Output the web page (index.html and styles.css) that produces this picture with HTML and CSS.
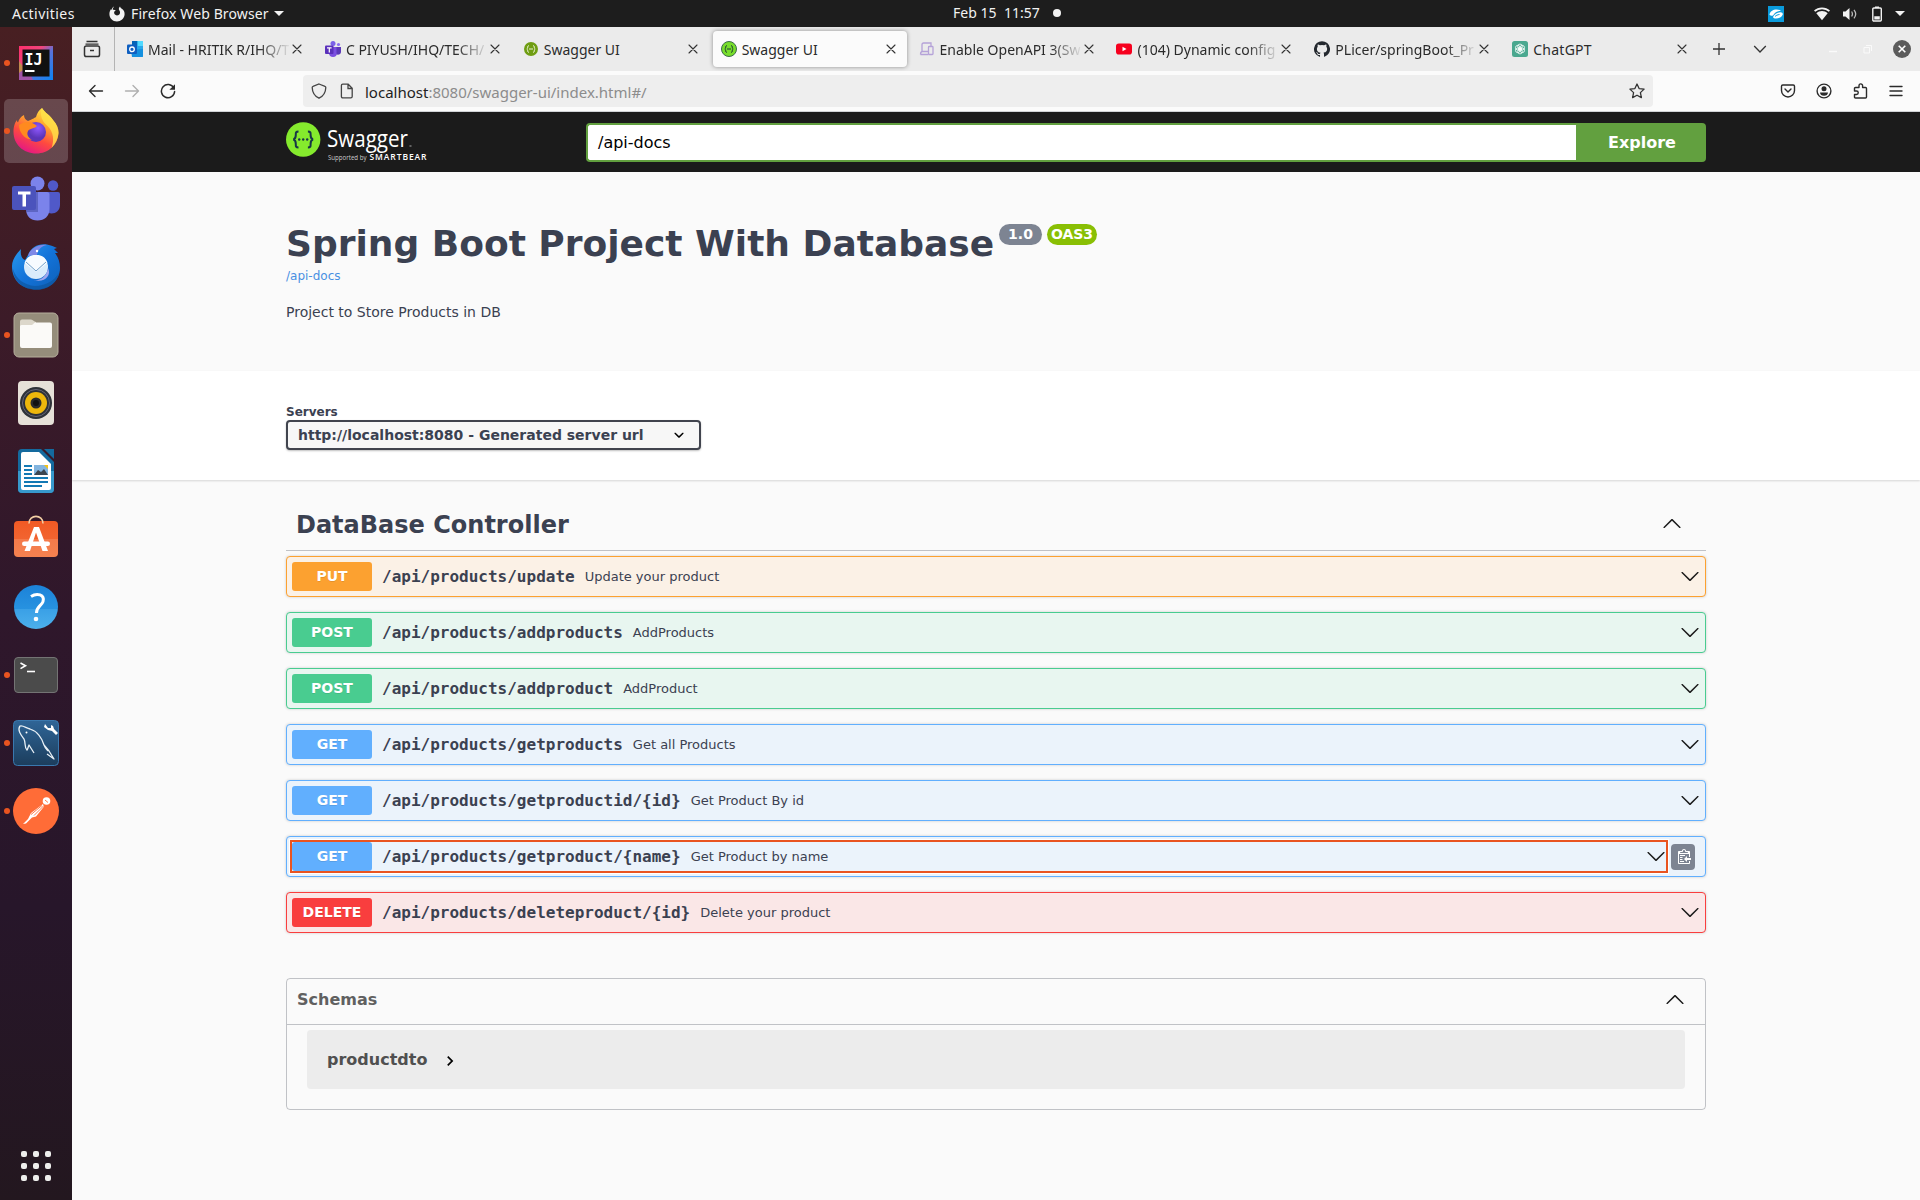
FILE: index.html
```html
<!DOCTYPE html>
<html lang="en">
<head>
<meta charset="utf-8">
<title>Swagger UI</title>
<link rel="stylesheet" href="styles.css">
</head>
<body>
<svg class="defs" width="0" height="0" aria-hidden="true">
  <defs>
    <linearGradient id="gIj" x1="0" y1="0" x2="1" y2="1"><stop offset="0" stop-color="#fe2f6c"/><stop offset=".35" stop-color="#f0457b"/><stop offset=".55" stop-color="#5a72d8"/><stop offset="1" stop-color="#0a85f5"/></linearGradient>
    <linearGradient id="gFox" x1=".8" y1="0" x2=".3" y2="1"><stop offset="0" stop-color="#fff44f"/><stop offset=".35" stop-color="#ffa52e"/><stop offset=".65" stop-color="#ff4b3e"/><stop offset="1" stop-color="#e31587"/></linearGradient>
    <radialGradient id="gGlobe" cx=".6" cy=".3"><stop offset="0" stop-color="#9059ff"/><stop offset="1" stop-color="#5b35b8"/></radialGradient>
    <linearGradient id="gBird" x1="0" y1="0" x2="1" y2="1"><stop offset="0" stop-color="#2a9cf0"/><stop offset=".5" stop-color="#1373d9"/><stop offset="1" stop-color="#0e5fb8"/></linearGradient>
    <linearGradient id="gBlue" x1="0" y1="0" x2="0" y2="1"><stop offset="0" stop-color="#1c82d8"/><stop offset=".54" stop-color="#2792e0"/><stop offset=".55" stop-color="#3aa0e6"/><stop offset="1" stop-color="#4cb0ec"/></linearGradient>
    <linearGradient id="gOrange" x1="0" y1="0" x2="0" y2="1"><stop offset="0" stop-color="#f15a24"/><stop offset=".5" stop-color="#f26430"/><stop offset=".51" stop-color="#f47a4a"/><stop offset="1" stop-color="#f58250"/></linearGradient>
    <linearGradient id="gSql" x1="0" y1="0" x2="0" y2="1"><stop offset="0" stop-color="#2f6597"/><stop offset="1" stop-color="#1c3d5c"/></linearGradient>
    <symbol id="down" viewBox="0 0 20 20"><path d="M17.418 6.109c.272-.268.709-.268.979 0s.271.701 0 .969l-7.908 7.83c-.27.268-.707.268-.979 0l-7.908-7.83c-.27-.268-.27-.701 0-.969.271-.268.709-.268.979 0L10 13.25l7.418-7.141z"/></symbol>
    <symbol id="up" viewBox="0 0 20 20"><path d="M17.418 14.908c.272.268.709.268.979 0s.271-.701 0-.969l-7.908-7.83c-.27-.268-.707-.268-.979 0l-7.908 7.83c-.27.268-.27.701 0 .969.271.268.709.268.979 0L10 7.767l7.418 7.141z"/></symbol>
    <symbol id="close" viewBox="0 0 16 16"><path d="M4 4l8 8M12 4l-8 8" fill="none" stroke="#333" stroke-width="1.1" stroke-linecap="round"/></symbol>
  </defs>
</svg>

<header class="panel">
  <div class="panel-left">
    <span class="t-activities">Activities</span>
    <span class="app-menu">
      <svg width="16" height="16" viewBox="0 0 16 16"><path d="M5.2.6C4 2 3.700 3 3.900 3.900 5 3.700 6 3.900 6.900 4.500 5.200 5 4.900 6.200 5.200 7.300c.5 1.700 2.300 2.500 3.900 2C11.200 8.600 11.600 6.200 10.400 4.600 9.500 3.500 9.700 1.700 11 .6c.3 1.100 1.200 1.800 2.200 2.500 1.600 1.200 2.600 3.200 2.400 5.400-.4 4-3.700 7-7.700 7C3.700 15.500.4 12.100.4 8 .4 6 1.100 4.300 2.100 3 2.200 3.600 2.300 3.800 2.600 4 2.900 2.500 3.900 1.200 5.200.6z" fill="#f2f2f2"/></svg>
      <span class="t-firefox">Firefox Web Browser</span>
      <i class="tri"></i>
    </span>
  </div>
  <div class="clock"><span class="t-date">Feb 15</span><span class="t-time">11:57</span><i class="notif"></i></div>
  <div class="status">
    <svg class="zs" width="16" height="16" viewBox="0 0 16 16"><rect width="16" height="16" fill="#0a9bdc"/><path d="M1.500 8.500C2 5.500 5 3.500 8.500 3.500c2 0 3.500.5 4.500 1.500-2.500-.3-5 .7-6.500 2.500l-1.500 2c-2 .5-3.500 0-3.500-1z" fill="#fff"/><path d="M5 11c1-2.500 4-4.500 7-4.800 2-.2 3 .8 2.700 2.300C14 11 11 12.500 8 12.500c-1.500 0-2.700-.5-3-1.500z" fill="#fff"/><path d="M7 10.500c1-1 2.500-1.800 4.500-2" stroke="#0a9bdc" fill="none"/></svg>
    <svg class="wifi" width="16" height="16" viewBox="0 0 16 16"><path d="M.6 5.200C4.600 1.400 11.400 1.400 15.400 5.200" fill="none" stroke="#f2f2f2" stroke-width="1.700"/><path d="M2.300 7.200C5.600 4.400 10.400 4.400 13.700 7.200L8 14.200z" fill="#f2f2f2"/></svg>
    <svg class="vol" width="16" height="16" viewBox="0 0 16 16"><path d="M1 5.500h2.500L7.500 2v12L3.500 10.500H1z" fill="#f2f2f2"/><path d="M9.600 5.500c1 1.500 1 3.500 0 5M12 3.800c2 2.500 2 6 0 8.500" fill="none" stroke="#bbb" stroke-width="1.300"/></svg>
    <svg class="bat" width="12" height="16" viewBox="0 0 12 16"><rect x="1.800" y="2" width="8.500" height="13" rx="1" fill="none" stroke="#f2f2f2" stroke-width="1.400"/><path d="M4 .6h4v1.500H4zM3.300 10.200h5.500v3.300H3.300z" fill="#f2f2f2"/></svg>
    <i class="tri"></i>
  </div>
</header>

<div class="desktop">
<nav class="dock">
  <div class="dock-item running">
    <svg width="48" height="48" viewBox="0 0 48 48"><rect x="7" y="7" width="34" height="34" fill="url(#gIj)"/><path d="M7 22l5 7-1 12H7z" fill="#c08a4e"/><path d="M7 34l8-6 6 13H7z" fill="#a155a8"/><rect x="10.500" y="10.500" width="27" height="27" fill="#111"/><text class="ij" x="12.500" y="25.500">IJ</text><rect x="13" y="31" width="9.500" height="2" fill="#fff"/></svg>
  </div>
  <div class="dock-item running active">
    <svg width="48" height="48" viewBox="0 0 48 48"><path d="M30 1c3 5 8 7 11 12 4 4 5.500 9 5.500 13C46 38 36 46.500 24.500 46.500 11 46.500 1.500 37 1.500 25c0-6 1.500-9.500 3.500-12 0 1.500.5 2 1 2.500C7 12 9 9.500 12 8c0 3 1.500 5 4 6 5-2 6-3 8-4 1-4 3-7 6-9z" fill="url(#gFox)"/><path d="M30 1c3 5 8 7 11 12 4 4 5.500 9 5.500 13-.5 6-3 11-7 15 3-8 2-16-4-22-6-5-8-12-5.500-18z" fill="#ffe14a" opacity=".8"/><circle cx="24" cy="25" r="10" fill="url(#gGlobe)"/><path d="M7 18c6-4 12-4 18 1-3 3-7 2-9 5-2 4 1 7 4 9-8-1-13-8-13-15z" fill="#ff8a1f"/></svg>
  </div>
  <div class="dock-item">
    <svg width="48" height="48" viewBox="0 0 48 48"><circle cx="25.500" cy="8.500" r="7" fill="#7b83eb"/><circle cx="41" cy="10.500" r="5.200" fill="#5059c9"/><path d="M34 17h12a2 2 0 0 1 2 2v11c0 5-4 8.500-8.500 8.500S32 35 32 30z" fill="#5059c9"/><path d="M14 17h21a2.500 2.500 0 0 1 2.500 2.500V34c0 7-5 11.500-12 11.500S14 41 14 34z" fill="#7b83eb"/><path d="M14 17h12v20H14z" fill="#4a52a8" opacity=".6"/><rect x="0" y="11" width="24" height="24" rx="2" fill="#4b53bc"/><path d="M6 16.500h12.500v3h-4.500v12h-3.500v-12H6z" fill="#fff"/></svg>
  </div>
  <div class="dock-item">
    <svg width="48" height="48" viewBox="0 0 48 48"><path d="M16 12C19 4 27 0 35 1.500c4 .8 7 2 10 3.500l-3 1 4 4-3 0c3 4 5 9 5 15 0 12-10 21.500-23 21.500C10 46.500 0 38 0 23c0-6 4-12 9-17-1 6 1 10 4 11z" fill="url(#gBird)"/><path d="M1 26c3 10 11 16 22 17 10 0 19-5 24-13-2 10-11 17-23 17S1 38 1 26z" fill="#0d5298" opacity=".6"/><path d="M16 13C18 5 27 1 35 2c-6 1-9 5-10 10z" fill="#a78bea" opacity=".7"/><circle cx="24" cy="24" r="12" fill="#d9ecfb"/><path d="M12.500 20l11.500 9 11.500-9C33 14 30 12 24 12s-9 2-11.500 8z" fill="#f6fbff"/><path d="M14 19l10 9 10-9" fill="none" stroke="#6f9fc9" stroke-width="1"/><path d="M22 37c7 1 13-4 14-12 4 8-4 15-14 12z" fill="#9fa6ee"/><circle cx="25" cy="8" r="1.200" fill="#fff"/></svg>
  </div>
  <div class="dock-item running">
    <svg width="48" height="48" viewBox="0 0 48 48"><rect x="2" y="2" width="44" height="44" rx="5" fill="#958d7b" stroke="#b5ae9c"/><path d="M8 10.500a2 2 0 0 1 2-2h9c2 0 3 2.500 5 2.500v7H8z" fill="#dcd7cb"/><path d="M8 15.500c0-1.500 1-1.500 3-1.500h8c3 0 2-2.500 5-2.500h14a2 2 0 0 1 2 2V35a2 2 0 0 1-2 2H10a2 2 0 0 1-2-2z" fill="#fbfaf8"/></svg>
  </div>
  <div class="dock-item">
    <svg width="48" height="48" viewBox="0 0 48 48"><rect x="6" y="2" width="36" height="44" rx="4" fill="#e6e1d8"/><circle cx="24" cy="24" r="16" fill="#2e3238"/><circle cx="24" cy="24" r="13.500" fill="none" stroke="#667" stroke-width="1"/><circle cx="24" cy="24" r="11" fill="#edb70c"/><circle cx="24" cy="24" r="5.500" fill="#2a2a2a"/><circle cx="24" cy="24" r="3" fill="#111"/></svg>
  </div>
  <div class="dock-item">
    <svg width="48" height="48" viewBox="0 0 48 48"><path d="M10 2h19l13 13v27a4 4 0 0 1-4 4H10a4 4 0 0 1-4-4V6a4 4 0 0 1 4-4z" fill="#146a9e"/><path d="M6 24h36v18a4 4 0 0 1-4 4H10a4 4 0 0 1-4-4z" fill="#3799cc"/><path d="M11 5h16l12 12v24a2 2 0 0 1-2 2H11a2 2 0 0 1-2-2V7a2 2 0 0 1 2-2z" fill="#fff"/><path d="M32 2h10v10z" fill="#146a9e"/><path d="M12 18h8v2h-8zM12 22h8v2h-8zM12 26h8v2h-8zM12 30h24v2H12zM12 34h24v2H12zM12 38h18v2H12z" fill="#1379b4"/><rect x="22" y="18" width="14" height="10" fill="#83b5df"/><path d="M22 28l4-5 3 2 3-3 4 6z" fill="#3c4650"/><path d="M32 18h4v4z" fill="#f5c211"/></svg>
  </div>
  <div class="dock-item">
    <svg width="48" height="48" viewBox="0 0 48 48"><rect x="2" y="6" width="44" height="36" rx="4" fill="url(#gOrange)"/><path d="M17 8.500c0-9.500 14-9.500 14 0" fill="none" stroke="#f2cfa4" stroke-width="1.600"/><path d="M22 12h5l9 24h-5.500L24 17.500 18 36h-5.500z" fill="#fff"/><rect x="10" y="26.500" width="28" height="4.500" rx="2.200" fill="#fff"/></svg>
  </div>
  <div class="dock-item">
    <svg width="48" height="48" viewBox="0 0 48 48"><circle cx="24" cy="24" r="22" fill="url(#gBlue)"/><path d="M19 13.500c6-4 14-2 12 5-1.500 4.500-6.500 5-6.500 11.500" fill="none" stroke="#fff" stroke-width="3"/><circle cx="24" cy="36" r="2.300" fill="#fff"/></svg>
  </div>
  <div class="dock-item running">
    <svg width="48" height="48" viewBox="0 0 48 48"><rect x="2.500" y="6.500" width="43" height="35" rx="3.500" fill="#4b4b4b" stroke="#747474"/><path d="M8.500 12l5 2.800-5 2.800" fill="none" stroke="#fff" stroke-width="1.600"/><path d="M15 20.500h8" stroke="#fff" stroke-width="1.600"/></svg>
  </div>
  <div class="dock-item running">
    <svg width="48" height="48" viewBox="0 0 48 48"><rect x="1.500" y="1.500" width="45" height="45" rx="4" fill="url(#gSql)" stroke="#3a78ae"/><path d="M22 34l-5-8c-1 2-1 4-2 5-3-3-1-7-3-11C9 16 5 11 8 7c3-1 6 2 10 3 7 2 12 9 14 16 1 3 2 4 4 6M32 26l5 6 5 8-7-5" fill="none" stroke="#e8f0f6" stroke-width="1.300" stroke-linejoin="round"/><circle cx="14.500" cy="13.500" r="1" fill="#fff"/><path d="M33 5l3 4 3 0 0-3 2 1 1 3 4 4-2 2-4-4-4-1-4-3z" fill="#fff"/></svg>
  </div>
  <div class="dock-item running">
    <svg width="48" height="48" viewBox="0 0 48 48"><circle cx="24" cy="24" r="23" fill="#ff6c37"/><circle cx="34.500" cy="14" r="3.800" fill="#fff"/><path d="M31 17l-12 9-3 6-5 5 3-.5 6-6 4-1 8-10z" fill="#fff"/><path d="M19 27.500l11-9M22 28.500l10-10M33 13l3 2.500" stroke="#ff6c37" stroke-width=".9"/></svg>
  </div>
  <div class="apps">
    <i></i><i></i><i></i><i></i><i></i><i></i><i></i><i></i><i></i>
  </div>
</nav>

<main class="browser">
  <div class="tabbar">
    <div class="view-btn">
      <svg width="20" height="20" viewBox="0 0 20 20" fill="none" stroke="#333" stroke-width="1.500"><path d="M4.500 2.500h11M3.500 5.200h13" stroke-width="1.300"/><rect x="2.500" y="7" width="15" height="10.500" rx="1.800"/><path d="M8 11.500h4"/></svg>
    </div>
    <div class="tab">
      <svg width="16" height="16" viewBox="0 0 16 16"><path d="M5 0h11v16H5z" fill="#28a8ea"/><path d="M5 0h5.500v5H5z" fill="#0364b8"/><path d="M10.500 0H16v5h-5.500z" fill="#50d9ff"/><path d="M4 9l12-1v6.500a1.500 1.500 0 0 1-1.500 1.500H5z" fill="#1490df"/><rect x="0" y="3.500" width="10" height="9.500" rx="1" fill="#0f5fc0"/><circle cx="5" cy="8.300" r="2.300" fill="none" stroke="#fff" stroke-width="1.300"/></svg>
      <span class="tab-label faded">Mail - HRITIK R/IHQ/T</span><svg class="x" width="16" height="16"><use href="#close"/></svg>
    </div>
    <div class="tab">
      <svg width="16" height="16" viewBox="0 0 16 16"><circle cx="8" cy="2.500" r="2.500" fill="#7b61e8"/><circle cx="13.500" cy="3.500" r="1.600" fill="#8a6cf0"/><path d="M4 6h8v6c0 2.500-1.500 4-4 4s-4-1.500-4-4z" fill="#7b4fe0"/><path d="M11.500 6H16v5c0 2-2 3-4.500 2.500z" fill="#5b38b8"/><rect x="0" y="4.500" width="8.500" height="8.500" rx="1" fill="#5a30bb"/><path d="M2 6.300h4.600v1.300H4.900v4H3.700v-4H2z" fill="#fff"/></svg>
      <span class="tab-label faded">C PIYUSH/IHQ/TECH/</span><svg class="x" width="16" height="16"><use href="#close"/></svg>
    </div>
    <div class="tab">
      <svg width="16" height="16" viewBox="0 0 16 16"><circle cx="8" cy="8" r="7" fill="#6f9d12"/><path d="M5.800 4.500C4 4.500 5.500 7.600 3.800 8c1.700.4.200 3.500 2 3.500M10.200 4.500c1.800 0 .3 3.100 2 3.500-1.700.4-.2 3.500-2 3.500M6 8h4" fill="none" stroke="#e9f2d3" stroke-width="1"/></svg>
      <span class="tab-label">Swagger UI</span><svg class="x" width="16" height="16"><use href="#close"/></svg>
    </div>
    <div class="tab selected">
      <svg width="16" height="16" viewBox="0 0 16 16"><circle cx="8" cy="8" r="7.500" fill="#77dd2a" stroke="#3b6b48" stroke-width="1"/><path d="M5.800 4.500C4 4.500 5.500 7.600 3.800 8c1.700.4.200 3.500 2 3.500M10.200 4.500c1.800 0 .3 3.100 2 3.500-1.700.4-.2 3.500-2 3.500M6 8h4" fill="none" stroke="#1b3c33" stroke-width="1"/></svg>
      <span class="tab-label">Swagger UI</span><svg class="x" width="16" height="16"><use href="#close"/></svg>
    </div>
    <div class="tab">
      <svg width="16" height="16" viewBox="0 0 16 16" fill="none" stroke="#b5a2d8" stroke-width="1.300"><path d="M3 10V3.500C3 2.500 3.500 2 4.500 2H12v3M1.500 13.500h8M1.500 13.500c0-1.800.5-3 2-3h5.500"/><rect x="9.500" y="5.500" width="4.500" height="8" rx=".8"/></svg>
      <span class="tab-label faded">Enable OpenAPI 3(Sw</span><svg class="x" width="16" height="16"><use href="#close"/></svg>
    </div>
    <div class="tab">
      <svg width="16" height="16" viewBox="0 0 16 16"><rect x="0" y="2.500" width="16" height="11" rx="2.800" fill="#f6001e"/><path d="M6.500 5.700v4.600l4-2.300z" fill="#fff"/></svg>
      <span class="tab-label faded">(104) Dynamic config</span><svg class="x" width="16" height="16"><use href="#close"/></svg>
    </div>
    <div class="tab">
      <svg width="16" height="16" viewBox="0 0 16 16"><path d="M8 .2a8 8 0 0 0-2.530 15.590c.4.070.55-.17.550-.38l-.010-1.490c-2.010.37-2.530-.49-2.690-.94-.09-.23-.48-.94-.82-1.130-.28-.15-.68-.52-.010-.53.630-.010 1.080.58 1.230.82.720 1.210 1.870.87 2.330.66.070-.52.280-.87.510-1.070-1.780-.2-3.640-.89-3.640-3.950 0-.87.310-1.590.82-2.150-.08-.2-.36-1.020.08-2.120 0 0 .67-.21 2.200.82a7.420 7.420 0 0 1 4 0c1.530-1.040 2.200-.82 2.200-.82.440 1.100.160 1.920.080 2.120.510.560.820 1.270.820 2.150 0 3.070-1.870 3.750-3.650 3.950.290.250.540.730.540 1.480l-.010 2.200c0 .210.150.460.550.380A8 8 0 0 0 8 .2z" fill="#24292f"/></svg>
      <span class="tab-label faded">PLicer/springBoot_Pr</span><svg class="x" width="16" height="16"><use href="#close"/></svg>
    </div>
    <div class="tab">
      <svg width="16" height="16" viewBox="0 0 16 16"><rect width="16" height="16" rx="2.500" fill="#4aa88f"/><g fill="none" stroke="#fff" stroke-width=".8"><circle cx="8" cy="8" r="1.800"/><circle cx="8" cy="5.400" r="2.300"/><circle cx="10.250" cy="6.700" r="2.300"/><circle cx="10.250" cy="9.300" r="2.300"/><circle cx="8" cy="10.600" r="2.300"/><circle cx="5.750" cy="9.300" r="2.300"/><circle cx="5.750" cy="6.700" r="2.300"/></g></svg>
      <span class="tab-label wide">ChatGPT</span><svg class="x" width="16" height="16"><use href="#close"/></svg>
    </div>
    <svg class="plus" width="16" height="16" viewBox="0 0 16 16"><path d="M8 2v12M2 8h12" stroke="#333" stroke-width="1.300"/></svg>
    <svg class="all" width="16" height="16" viewBox="0 0 16 16"><path d="M2.200 5l5.800 6 5.800-6" fill="none" stroke="#333" stroke-width="1.300"/></svg>
    <svg class="min" width="16" height="16" viewBox="0 0 16 16"><path d="M4 10.500h8" stroke="#fafafa" stroke-width="1.300"/></svg>
    <svg class="max" width="16" height="16" viewBox="0 0 16 16"><path d="M5 6.500h5.500v5.500H5zM7 4.500h5.500V10" fill="none" stroke="#fafafa"/></svg>
    <svg class="quit" width="18" height="18" viewBox="0 0 18 18"><circle cx="9" cy="9" r="9" fill="#5b5b5b"/><path d="M5.700 5.700l6.600 6.600M12.300 5.700l-6.600 6.600" stroke="#fff" stroke-width="1.600"/></svg>
  </div>

  <div class="navbar">
    <svg width="16" height="16" viewBox="0 0 16 16" fill="none" stroke="#2b2b2b" stroke-width="1.400" stroke-linecap="round" stroke-linejoin="round"><path d="M14.500 8H1.500M7 2.500L1.500 8 7 13.500"/></svg>
    <svg width="16" height="16" viewBox="0 0 16 16" fill="none" stroke="#b0b0b0" stroke-width="1.400" stroke-linecap="round" stroke-linejoin="round"><path d="M1.500 8h13M9 2.500L14.500 8 9 13.500"/></svg>
    <svg width="16" height="16" viewBox="0 0 16 16"><path d="M13.800 5A6.600 6.600 0 1 0 14.600 8.500" fill="none" stroke="#2b2b2b" stroke-width="1.500" stroke-linecap="round"/><path d="M15 1.200v5.600H9.400z" fill="#2b2b2b"/></svg>
    <div class="urlbar">
      <svg width="16" height="16" viewBox="0 0 16 16"><path d="M8 1l6 2.300c.6.200.8.600.8 1.100C14.700 9.500 12.300 13 8 15.200 3.700 13 1.300 9.500 1.200 4.400c0-.5.200-.9.800-1.100z" fill="none" stroke="#444" stroke-width="1.300"/></svg>
      <svg class="pg" width="16" height="16" viewBox="0 0 16 16"><path d="M3.800 1.200h5.400l4 4v8.200c0 .9-.5 1.400-1.400 1.400h-8c-.9 0-1.400-.5-1.400-1.400V2.600c0-.9.500-1.400 1.400-1.400zM9 1.500v4h4" fill="none" stroke="#444" stroke-width="1.300"/></svg>
      <span class="url"><b>localhost</b>:8080/swagger-ui/index.html#/</span>
      <svg class="star" width="16" height="16" viewBox="0 0 16 16"><path d="M8 1l2.100 4.600 5 .5-3.700 3.500 1 5L8 12.200 3.600 14.600l1-5L.9 6.100l5-.5z" fill="none" stroke="#333" stroke-width="1.300" stroke-linejoin="round"/></svg>
    </div>
    <div class="tools">
      <svg width="16" height="16" viewBox="0 0 16 16" fill="none" stroke="#2b2b2b" stroke-width="1.400" stroke-linecap="round" stroke-linejoin="round"><path d="M2.800 2h10.400c.8 0 1.300.5 1.300 1.300V7.500c0 3.600-2.900 6.500-6.500 6.500S1.500 11.100 1.500 7.500V3.300C1.500 2.500 2 2 2.800 2zM5 6l3 3 3-3"/></svg>
      <svg width="16" height="16" viewBox="0 0 16 16"><circle cx="8" cy="8" r="6.900" fill="none" stroke="#2b2b2b" stroke-width="1.400"/><circle cx="8" cy="5.800" r="2.500" fill="#2b2b2b"/><path d="M4 9.500h8c0 2-1.700 3.300-4 3.300s-4-1.300-4-3.300z" fill="#2b2b2b"/></svg>
      <svg width="16" height="16" viewBox="0 0 16 16" fill="none" stroke="#2b2b2b" stroke-width="1.400" stroke-linejoin="round"><path d="M7 4.500V2.700a1.800 1.800 0 0 1 3.600 0v1.800h2.900c.5 0 1 .4 1 1V14c0 .6-.4 1-1 1H3.500c-.6 0-1-.4-1-1v-2.500h2a1.700 1.700 0 0 0 0-3.500h-2V5.500c0-.6.400-1 1-1z"/></svg>
      <svg width="16" height="16" viewBox="0 0 16 16" stroke="#2b2b2b" stroke-width="1.400" stroke-linecap="round"><path d="M2 3.500h12M2 8h12M2 12.500h12"/></svg>
    </div>
  </div>

  <div class="page">
    <div class="topbar"><div class="wrapper topbar-row">
      <svg class="logo" width="150" height="44" viewBox="0 0 150 44">
        <circle cx="17.200" cy="17.500" r="17.200" fill="#85ea2d"/>
        <path d="M12.500 9.500c-3 0-2.700 1.500-2.700 3.500 0 2.500 0 4-2.500 4.500 2.500.5 2.500 2 2.500 4.500 0 2-.3 3.500 2.700 3.500M21.900 9.500c3 0 2.700 1.500 2.700 3.500 0 2.500 0 4 2.500 4.500-2.500.5-2.500 2-2.500 4.500 0 2 .3 3.500-2.700 3.500" fill="none" stroke="#173647" stroke-width="2"/>
        <circle cx="13.200" cy="17.500" r="1.200" fill="#173647"/><circle cx="17.200" cy="17.500" r="1.200" fill="#173647"/><circle cx="21.200" cy="17.500" r="1.200" fill="#173647"/>
        <text class="logo-name" x="41" y="25" textLength="81" lengthAdjust="spacingAndGlyphs">Swagger</text>
        <rect x="123.500" y="23.500" width="2" height="1" fill="#aaa"/>
        <text class="logo-by" x="42" y="38" textLength="38.500" lengthAdjust="spacingAndGlyphs">Supported by</text>
        <text class="logo-sb" x="83.500" y="38" textLength="57" lengthAdjust="spacing">SMARTBEAR</text>
      </svg>
      <div class="search"><div class="search-input">/api-docs</div><div class="search-btn">Explore</div></div>
    </div></div>

    <section class="info"><div class="wrapper">
      <h1 class="title">Spring Boot Project With Database<span class="badges"><span class="ver">1.0</span><span class="ver oas">OAS3</span></span></h1>
      <a class="docs">/api-docs</a>
      <p class="desc">Project to Store Products in DB</p>
    </div></section>

    <section class="schemes"><div class="wrapper">
      <div class="srv-label">Servers</div>
      <div class="select"><span>http://localhost:8080 - Generated server url</span>
        <svg width="20" height="20" viewBox="0 0 20 20"><path d="M13.418 7.859c.271-.268.709-.268.978 0 .27.268.272.701 0 .969l-3.908 3.830c-.27.268-.707.268-.979 0l-3.908-3.830c-.27-.267-.27-.701 0-.969.271-.268.709-.268.978 0L10 11l3.418-3.141z"/></svg>
      </div>
    </div></section>

    <section class="wrapper ops">
      <h3 class="tag"><span>DataBase Controller</span><svg width="20" height="20"><use href="#up"/></svg></h3>
      <div class="op put"><div class="summary"><span class="method">PUT</span><span class="path">/api/products/update</span><span class="what">Update your product</span><svg width="20" height="20"><use href="#down"/></svg></div></div>
      <div class="op post"><div class="summary"><span class="method">POST</span><span class="path">/api/products/addproducts</span><span class="what">AddProducts</span><svg width="20" height="20"><use href="#down"/></svg></div></div>
      <div class="op post"><div class="summary"><span class="method">POST</span><span class="path">/api/products/addproduct</span><span class="what">AddProduct</span><svg width="20" height="20"><use href="#down"/></svg></div></div>
      <div class="op get"><div class="summary"><span class="method">GET</span><span class="path">/api/products/getproducts</span><span class="what">Get all Products</span><svg width="20" height="20"><use href="#down"/></svg></div></div>
      <div class="op get"><div class="summary"><span class="method">GET</span><span class="path">/api/products/getproductid/{id}</span><span class="what">Get Product By id</span><svg width="20" height="20"><use href="#down"/></svg></div></div>
      <div class="op get focused"><div class="summary"><span class="method">GET</span><span class="path">/api/products/getproduct/{name}</span><span class="what">Get Product by name</span><svg width="20" height="20"><use href="#down"/></svg></div>
        <span class="copy"><svg width="15" height="16" viewBox="0 0 15 16"><path fill="#fff" fill-rule="evenodd" d="M4 12h4v1H4v-1zm5-6H4v1h5V6zm2 3V7l-3 3 3 3v-2h5V9h-5zM6.500 8H4v1h2.500V8zM4 11h2.500v-1H4v1zm9 1h1v2c-.02.280-.11.520-.3.700-.190.180-.420.280-.7.300H3c-.550 0-1-.450-1-1V3c0-.550.450-1 1-1h3c0-1.110.890-2 2-2 1.110 0 2 .890 2 2h3c.550 0 1 .450 1 1v5h-1V5H3v9h10v-2zM4 4h8c0-.550-.450-1-1-1h-1c-.550 0-1-.450-1-1s-.450-1-1-1-1 .450-1 1-.450 1-1 1H5c-.550 0-1 .450-1 1z"/></svg></span>
      </div>
      <div class="op delete"><div class="summary"><span class="method">DELETE</span><span class="path">/api/products/deleteproduct/{id}</span><span class="what">Delete your product</span><svg width="20" height="20"><use href="#down"/></svg></div></div>
    </section>

    <section class="wrapper">
      <div class="models">
        <h4 class="models-head">Schemas<svg width="20" height="20"><use href="#up"/></svg></h4>
        <div class="model"><span>productdto</span><svg width="20" height="20" viewBox="0 0 24 24"><path d="M10 6L8.590 7.410 13.170 12l-4.580 4.590L10 18l6-6z"/></svg></div>
      </div>
    </section>
  </div>
</main>
</div>
</body>
</html>
```
FILE: styles.css
```css
* { box-sizing: border-box; }
body {
  margin: 0;
  height: 1200px;
  overflow: hidden;
  display: flex;
  flex-direction: column;
  background: #fafafa;
  font-family: "DejaVu Sans", sans-serif;
  color: #3b4151;
}
svg { display: block; flex: none; }
.defs { position: absolute; }

/* system panel */
.panel {
  height: 27px;
  flex: none;
  display: grid;
  grid-template-columns: 953px 1fr auto;
  align-items: center;
  background: #1d1d1d;
  color: #f2f2f2;
  font: 14px/27px "Noto Sans", sans-serif;
  white-space: nowrap;
}
.panel-left { display: flex; padding-left: 12px; }
.t-activities { width: 97px; letter-spacing: .45px; }
.app-menu { display: flex; align-items: center; }
.t-firefox { margin-left: 6px; width: 143px; letter-spacing: .12px; }
.tri { border: 5px solid transparent; border-top-color: #f2f2f2; border-bottom: 0; }
.clock { display: flex; align-items: center; padding-bottom: 2px; line-height: 25px; }
.t-date { width: 51px; }
.t-time { width: 49px; }
.notif { width: 8px; height: 8px; margin-top: 1px; border-radius: 50%; background: #f2f2f2; }
.status { display: flex; align-items: center; padding-right: 15px; }
.zs { margin-right: 30px; }
.wifi { margin-right: 12px; }
.vol { margin-right: 13px; }
.bat { margin-right: 12px; }

.desktop { flex: 1; display: flex; min-height: 0; }

/* dock */
.dock {
  width: 72px;
  flex: none;
  padding: 4px;
  display: flex;
  flex-direction: column;
  gap: 4px;
  background: linear-gradient(#481f22, #3c1b28 25%, #2f172b 50%, #27162a 75%, #23171f);
}
.dock-item {
  height: 64px;
  position: relative;
  display: flex;
  align-items: center;
  justify-content: center;
  border-radius: 5px;
}
.dock-item.active { background: rgba(255, 255, 255, .19); }
.dock-item.running::before {
  content: "";
  position: absolute;
  left: 0;
  top: 29px;
  width: 6px;
  height: 6px;
  border-radius: 50%;
  background: #e95420;
}
.ij { font: bold 15px "DejaVu Sans Mono", monospace; fill: #fff; }
.apps {
  margin: auto auto 15px;
  display: grid;
  grid-template-columns: repeat(3, 6px);
  gap: 6px;
}
.apps i { height: 6px; border-radius: 2px; background: #eeeeec; }

/* browser chrome */
.browser { flex: 1; min-width: 0; display: flex; flex-direction: column; }
.tabbar {
  height: 44px;
  display: flex;
  align-items: center;
  background: #ebebeb;
  color: #2b2b2b;
  font: 14px/20px "Noto Sans", sans-serif;
}
.view-btn {
  width: 43px;
  height: 44px;
  margin-right: 2px;
  padding-right: 2px;
  display: flex;
  align-items: center;
  justify-content: center;
  border-right: 1px solid #b4b4b4;
}
.tab {
  width: 193.900px;
  height: 36px;
  margin: 0 2px;
  flex: none;
  display: flex;
  align-items: center;
  padding-left: 8px;
  border-radius: 4px;
}
.tab.selected { background: #fbfbfb; box-shadow: 0 0 4px rgba(0, 0, 0, .4); }
.tab-label {
  width: 141px;
  margin-left: 5px;
  padding-top: 1px;
  white-space: nowrap;
}
.tab-label.wide { letter-spacing: .25px; }
.faded {
  -webkit-mask-image: linear-gradient(to right, #000 110px, transparent 143px);
  mask-image: linear-gradient(to right, #000 110px, transparent 143px);
}
.plus { margin-left: 10.500px; }
.all { margin-left: 25px; }
.min { margin-left: 57px; }
.max { margin-left: 18px; }
.quit { margin-left: 18px; }

.navbar {
  height: 41px;
  display: flex;
  align-items: center;
  gap: 20px;
  padding: 0 16px;
  background: #fbfbfb;
  border-bottom: 1px solid #d0d3d6;
}
.urlbar {
  width: 1350px;
  height: 32px;
  margin-left: 107px;
  display: flex;
  align-items: center;
  padding: 0 8px;
  border-radius: 4px;
  background: #eee;
}
.pg { margin-left: 12px; }
.url {
  flex: 1;
  margin-left: 10px;
  padding-top: 1px;
  color: #8c8c8c;
  font: 15px/20px "Noto Sans", sans-serif;
}
.url b { font-weight: 400; color: #222; }
.tools { display: flex; gap: 20px; margin-left: auto; }

/* page */
.page { flex: 1; background: #fafafa; }
.wrapper { width: 1460px; margin: 0 auto; padding: 0 20px; }
.topbar { height: 60px; background: #1b1b1b; }
.topbar-row { display: flex; padding-top: 10px; }
.search { display: flex; margin: 1px 0 0 150px; flex: 1; height: 39px; }
.search-input {
  flex: 1;
  padding-left: 10px;
  border: 2px solid #62a03f;
  border-right: 0;
  border-radius: 4px 0 0 4px;
  background: #fff;
  color: #000;
  font-size: 16px;
  line-height: 36px;
}
.search-btn {
  width: 130px;
  padding-left: 2px;
  border-radius: 0 4px 4px 0;
  background: #62a03f;
  color: #fff;
  font-size: 16px;
  font-weight: 700;
  line-height: 40px;
  text-align: center;
}
.logo-name { font: 24px "Open Sans", sans-serif; fill: #fff; }
.logo-by { font: 7px "Open Sans", sans-serif; fill: #ccc; }
.logo-sb { font: 600 8.500px "Open Sans", sans-serif; fill: #fff; }

.info { height: 199px; padding-top: 50px; }
.title { display: flex; height: 42px; margin: 0; font-size: 36px; line-height: 44px; }
.badges { display: flex; gap: 5px; margin-left: 5px; padding-top: 2px; }
.ver {
  height: 21px;
  padding: 0 9px;
  border-radius: 57px;
  background: #7d8492;
  color: #fff;
  font-size: 14px;
  line-height: 20px;
}
.oas { background: #89bf04; padding: 0 4px; }
.docs { display: block; margin-top: 4px; font-size: 12px; line-height: 16px; color: #4990e2; }
.desc { margin: 20px 0 0; font-size: 14px; line-height: 17px; }

.schemes {
  height: 109px;
  padding-top: 33px;
  background: #fff;
  box-shadow: 0 1px 2px rgba(0, 0, 0, .15);
}
.srv-label { font-size: 12px; font-weight: 700; line-height: 16px; }
.select {
  width: 415px;
  height: 30px;
  display: flex;
  align-items: center;
  justify-content: space-between;
  padding: 0 10px;
  border: 2px solid #41444e;
  border-radius: 4px;
  background: #f7f7f7;
  box-shadow: 0 1px 2px rgba(0, 0, 0, .25);
  font-size: 14px;
  font-weight: 700;
}

.ops { padding-top: 21px; }
.tag {
  height: 50px;
  margin: 0 0 5px;
  padding: 0 24px 5px 10px;
  display: flex;
  align-items: center;
  justify-content: space-between;
  border-bottom: 1px solid rgba(59, 65, 81, .3);
  font-size: 24px;
}
.tag span { padding-top: 3px; }
.tag svg { fill: #1b1b1b; }
.op {
  height: 41px;
  margin-bottom: 15px;
  padding: 5px;
  display: flex;
  align-items: center;
  border: 1px solid;
  border-radius: 4px;
  box-shadow: 0 0 3px rgba(0, 0, 0, .19);
}
.summary { flex: 1; height: 29px; display: flex; align-items: center; color: #3b4151; }
.summary svg { margin: 0 0 1px auto; fill: #1b1b1b; }
.method {
  width: 80px;
  border-radius: 3px;
  color: #fff;
  font-size: 14px;
  font-weight: 700;
  line-height: 29px;
  text-align: center;
  text-shadow: 0 1px 0 rgba(0, 0, 0, .1);
}
.path { padding: 0 10px; font: bold 16px/20px "DejaVu Sans Mono", monospace; }
.what { font-size: 13px; }
.put { border-color: #fca130; background: #fbf1e6; }
.put .method { background: #fca130; }
.post { border-color: #49cc90; background: #e8f6f0; }
.post .method { background: #49cc90; }
.get { border-color: #61affe; background: #ebf3fb; }
.get .method { background: #61affe; }
.delete { border-color: #f93e3e; background: #fae7e7; }
.delete .method { background: #f93e3e; }
.focused .summary { outline: 2px solid #e95420; box-shadow: 0 0 0 3px #fff; }
.copy {
  width: 24px;
  height: 26px;
  margin: 0 5px;
  display: flex;
  align-items: center;
  justify-content: center;
  border-radius: 4px;
  background: #7d8492;
}
.focused .summary svg { margin-right: 0; }

.models {
  height: 132px;
  margin-top: 45px;
  border: 1px solid rgba(59, 65, 81, .3);
  border-radius: 4px;
}
.models-head {
  height: 46px;
  margin: 0 0 5px;
  padding: 0 20px 5px 10px;
  display: flex;
  align-items: center;
  justify-content: space-between;
  border-bottom: 1px solid rgba(59, 65, 81, .3);
  color: #606060;
  font-size: 16px;
}
.models-head svg { fill: #1b1b1b; }
.model {
  height: 59px;
  margin: 0 20px;
  padding-left: 20px;
  display: flex;
  align-items: center;
  gap: 13px;
  border-radius: 4px;
  background: #ececec;
  color: #505050;
  font-size: 16px;
  font-weight: 700;
}
.model svg { fill: #000; margin-top: 2px; }
```
